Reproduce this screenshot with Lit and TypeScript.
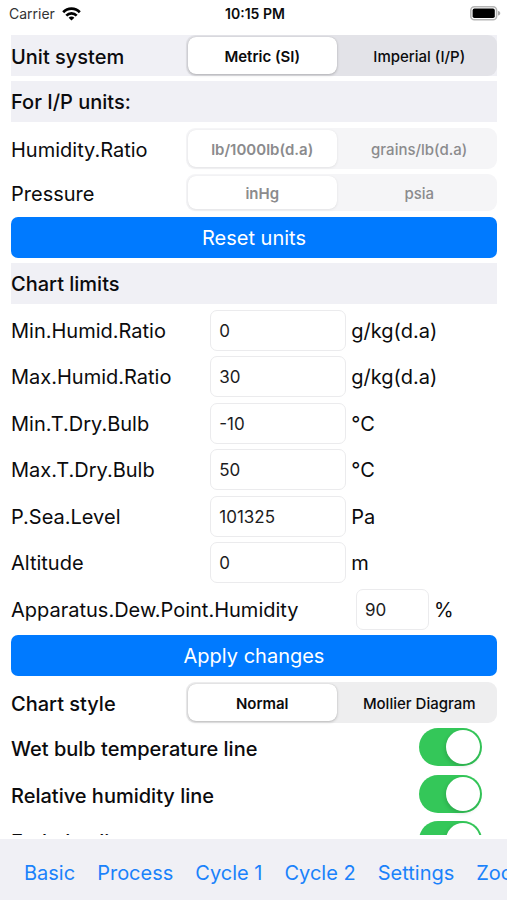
import { LitElement, html, css, svg } from "lit";
import { customElement, property } from "lit/decorators.js";

const base = css`
  * {
    box-sizing: border-box;
  }
  :host {
    display: block;
    font-family: Inter, "Liberation Sans", sans-serif;
    color: #0b0b0d;
  }
`;

@customElement("status-bar")
class StatusBar extends LitElement {
  static styles = [
    base,
    css`
      .bar {
        display: grid;
        grid-template-columns: 1fr auto 1fr;
        align-items: center;
        height: 27px;
        padding: 0 6px 0 9px;
        font-size: 14px;
        line-height: 20px;
      }
      .carrier {
        display: flex;
        align-items: center;
        gap: 7px;
        color: #333335;
      }
      .time {
        font-weight: 600;
      }
      .battery {
        justify-self: end;
      }
      svg {
        display: block;
      }
    `,
  ];

  render() {
    return html`<header class="bar">
      <div class="carrier">
        <span>Carrier</span>
        <svg width="19" height="14" viewBox="0 0 19 14" fill="none" stroke="#000" stroke-width="2.7" aria-hidden="true">
          ${svg`<path d="M1.2 5.3C5.8 .5 13.2 .5 17.8 5.3" />
          <path d="M4.3 8.6C7.2 5.7 11.8 5.7 14.7 8.6" />
          <path d="M9.5 13.6L6.6 10.7C8.2 9.2 10.8 9.2 12.4 10.7Z" fill="#000" stroke="none" />`}
        </svg>
      </div>
      <div class="time">10:15 PM</div>
      <svg class="battery" width="31" height="15" viewBox="0 0 31 15" aria-hidden="true">
        <rect x=".8" y=".8" width="25.8" height="13" rx="3.6" fill="#fff" stroke="#b5b5b5" stroke-width="1.6" />
        <rect x="2.6" y="2.6" width="22.2" height="9.4" rx="1.8" fill="#000" />
        <path d="M28 5C31 5.4 31 9.2 28 9.6Z" fill="#a8a8a8" />
      </svg>
    </header>`;
  }
}

@customElement("segment-row")
class SegmentRow extends LitElement {
  @property() label = "";
  @property({ type: Array }) options: string[] = [];
  @property({ type: Boolean }) shaded = false;
  @property({ type: Boolean }) strong = false;
  @property({ type: Boolean }) off = false;
  @property({ type: Boolean }) compact = false;

  static styles = [
    base,
    css`
      .row {
        display: grid;
        grid-template-columns: 36fr 64fr;
        min-height: 41px;
      }
      .compact {
        min-height: 37px;
      }
      .shaded {
        background: #f0f0f5;
      }
      .label {
        align-self: center;
        padding-top: 2px;
        font-size: 20px;
        line-height: 24px;
        white-space: nowrap;
      }
      .strong .label {
        font-weight: 500;
      }
      .track {
        display: grid;
        grid-template-columns: 1fr 1fr;
        border-radius: 9px;
        background: #eeeeef;
      }
      .shaded .track {
        background: #e3e3e8;
      }
      .off .track {
        background: #f5f5f7;
      }
      .option {
        display: grid;
      }
      .option input {
        appearance: none;
        grid-area: 1 / 1;
        margin: 2px 4px 2px 2px;
        border-radius: 8px;
      }
      .option input:checked {
        background: #fff;
        box-shadow: 0 1px 3px #00000038, 0 0 1px #0000002e;
      }
      .off input:checked {
        box-shadow: 0 1px 3px #00000012, 0 0 1px #00000012;
      }
      .option span {
        grid-area: 1 / 1;
        place-self: center;
        padding-top: 2px;
        font-size: 15px;
        line-height: 20px;
        font-weight: 500;
        white-space: nowrap;
      }
      .option input:checked + span {
        font-weight: 600;
        padding-right: 3px;
      }
      .off .option span {
        color: #8b8b8d;
      }
    `,
  ];

  render() {
    const flags = [
      "row",
      this.shaded ? "shaded" : "",
      this.strong ? "strong" : "",
      this.off ? "off" : "",
      this.compact ? "compact" : "",
    ].join(" ");
    return html`<div class=${flags} role="radiogroup" aria-labelledby="name">
      <span class="label" id="name">${this.label}</span>
      <div class="track">
        ${this.options.map(
          (o, i) => html`<label class="option">
            <input type="radio" name="choice" ?checked=${i === 0} ?disabled=${this.off} />
            <span>${o}</span>
          </label>`
        )}
      </div>
    </div>`;
  }
}

@customElement("field-row")
class FieldRow extends LitElement {
  @property() label = "";
  @property() value = "";
  @property() unit = "";
  @property({ type: Boolean }) wide = false;

  static styles = [
    base,
    css`
      .row {
        display: grid;
        grid-template-columns: 41fr 28fr 31fr;
        align-items: center;
        font-size: 20px;
        line-height: 24px;
        white-space: nowrap;
      }
      .wide {
        grid-template-columns: 71fr 15fr 14fr;
      }
      input {
        width: 100%;
        min-width: 0;
        height: 41px;
        padding: 0 8px;
        border: 1px solid #ebebed;
        border-radius: 7px;
        background: #fff;
        font: inherit;
        font-size: 17px;
        color: #1c1c1e;
      }
      .unit {
        padding-left: 5px;
      }
    `,
  ];

  render() {
    return html`<div class=${this.wide ? "row wide" : "row"}>
      <label for="box">${this.label}</label>
      <input id="box" type="text" .value=${this.value} />
      <span class="unit">${this.unit}</span>
    </div>`;
  }
}

@customElement("switch-row")
class SwitchRow extends LitElement {
  @property() label = "";

  static styles = [
    base,
    css`
      .row {
        display: flex;
        justify-content: space-between;
        align-items: flex-start;
        height: 41px;
        padding-right: 15px;
        font-size: 20px;
        font-weight: 500;
        line-height: 43px;
      }
      input {
        appearance: none;
        flex: none;
        display: grid;
        justify-content: end;
        width: 63px;
        height: 38px;
        margin: 0;
        padding: 2px;
        border-radius: 19px;
        background: #34c759;
      }
      input::before {
        content: "";
        width: 34px;
        height: 34px;
        border-radius: 50%;
        background: #fff;
        box-shadow: -1px 2px 4px #00000026;
      }
    `,
  ];

  render() {
    return html`<label class="row">
      <span>${this.label}</span>
      <input type="checkbox" role="switch" checked />
    </label>`;
  }
}

@customElement("app-root")
class AppRoot extends LitElement {
  static styles = [
    base,
    css`
      :host {
        display: flex;
        flex-direction: column;
        height: 100vh;
        background: #fff;
      }
      .content {
        flex: 1;
        min-height: 0;
        overflow: hidden;
        display: flex;
        flex-direction: column;
        gap: 6px;
        margin: 8px 10px 4px 11px;
      }
      .group {
        flex: none;
        display: flex;
        flex-direction: column;
        gap: 5px;
      }
      .heading {
        height: 41px;
        margin: 0;
        background: #f0f0f5;
        font-size: 20px;
        font-weight: 500;
        line-height: 43px;
      }
      .action {
        height: 41px;
        padding: 0;
        border: 0;
        border-radius: 7px;
        background: #007aff;
        color: #fff;
        font: inherit;
        font-size: 20px;
      }
      .tabs {
        flex: none;
        display: flex;
        gap: 22px;
        height: 61px;
        padding: 7px 0 0 24px;
        overflow: hidden;
        background: #f0f0f5;
        font-size: 20px;
        line-height: 54px;
        white-space: nowrap;
      }
      .tabs a {
        flex: none;
        color: #1a82fb;
        text-decoration: none;
      }
    `,
  ];

  render() {
    const tabs = ["Basic", "Process", "Cycle 1", "Cycle 2", "Settings", "Zoom"];
    return html`
      <status-bar></status-bar>
      <main class="content">
        <div class="group">
          <segment-row shaded strong label="Unit system" .options=${["Metric (SI)", "Imperial (I/P)"]}></segment-row>
          <h2 class="heading">For I/P units:</h2>
        </div>
        <div class="group">
          <segment-row off label="Humidity.Ratio" .options=${["lb/1000lb(d.a)", "grains/lb(d.a)"]}></segment-row>
          <segment-row off compact label="Pressure" .options=${["inHg", "psia"]}></segment-row>
        </div>
        <div class="group">
          <button class="action">Reset units</button>
          <h2 class="heading">Chart limits</h2>
        </div>
        <div class="group">
          <field-row label="Min.Humid.Ratio" value="0" unit="g/kg(d.a)"></field-row>
          <field-row label="Max.Humid.Ratio" value="30" unit="g/kg(d.a)"></field-row>
        </div>
        <div class="group">
          <field-row label="Min.T.Dry.Bulb" value="-10" unit="°C"></field-row>
          <field-row label="Max.T.Dry.Bulb" value="50" unit="°C"></field-row>
        </div>
        <div class="group">
          <field-row label="P.Sea.Level" value="101325" unit="Pa"></field-row>
          <field-row label="Altitude" value="0" unit="m"></field-row>
        </div>
        <div class="group">
          <field-row wide label="Apparatus.Dew.Point.Humidity" value="90" unit="%"></field-row>
          <button class="action">Apply changes</button>
        </div>
        <div class="group">
          <segment-row strong label="Chart style" .options=${["Normal", "Mollier Diagram"]}></segment-row>
          <switch-row label="Wet bulb temperature line"></switch-row>
        </div>
        <div class="group">
          <switch-row label="Relative humidity line"></switch-row>
          <switch-row label="Enthalpy line"></switch-row>
        </div>
      </main>
      <nav class="tabs">${tabs.map((t) => html`<a href="#">${t}</a>`)}</nav>
    `;
  }
}
